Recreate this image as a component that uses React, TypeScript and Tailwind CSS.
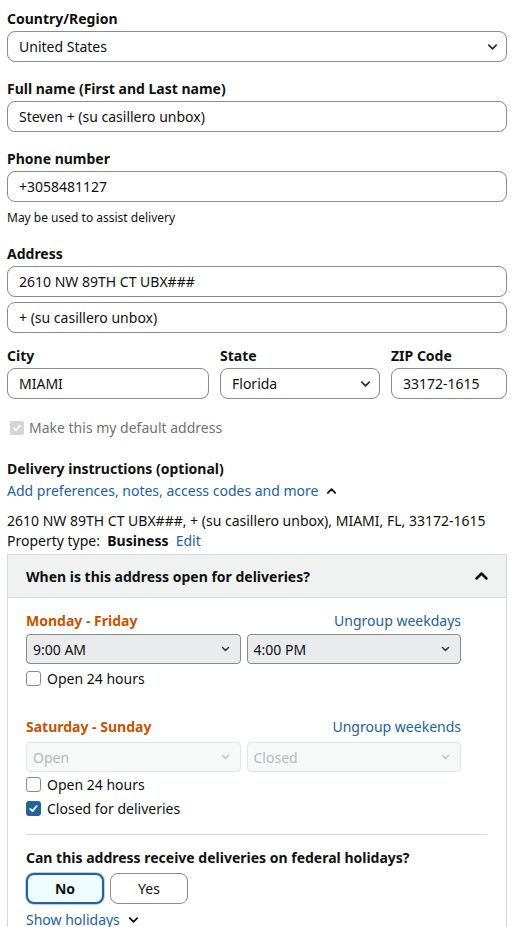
import React from 'react';

const ChevronDown = ({ className = '' }: { className?: string }) => (
  <svg viewBox="0 0 12 8" className={className} fill="none" stroke="currentColor" strokeWidth="2" strokeLinecap="round" strokeLinejoin="round">
    <path d="M2 2l4 4 4-4" />
  </svg>
);

const ChevronUp = ({ className = '' }: { className?: string }) => (
  <svg viewBox="0 0 12 8" className={className} fill="none" stroke="currentColor" strokeWidth="2" strokeLinecap="round" strokeLinejoin="round">
    <path d="M2 6l4-4 4 4" />
  </svg>
);

const Label = ({ children }: { children: React.ReactNode }) => (
  <div className="text-[14px] font-bold leading-[18px] text-[#0f1111] mb-[3px]">{children}</div>
);

const TextBox = ({ value }: { value: string }) => (
  <div className="h-[31px] flex items-center px-[11px] border border-[#888c8c] rounded-[8px] bg-white text-[14px] text-[#0f1111]">
    {value}
  </div>
);

const SelectBox = ({ value }: { value: string }) => (
  <div className="h-[31px] flex items-center justify-between pl-[11px] pr-[8px] border border-[#888c8c] rounded-[8px] bg-white text-[14px] text-[#0f1111]">
    <span>{value}</span>
    <ChevronDown className="w-[11px] h-[8px] text-[#333]" />
  </div>
);

const TimeSelect = ({ value, disabled }: { value: string; disabled?: boolean }) => (
  <div
    className={
      disabled
        ? 'flex-1 h-[30px] flex items-center justify-between pl-[6px] pr-[10px] border border-[#e3e6e6] rounded-[4px] bg-[#f7f8f8] text-[14px] text-[#b5b9b9]'
        : 'flex-1 h-[30px] flex items-center justify-between pl-[6px] pr-[10px] border border-[#888c8c] rounded-[4px] bg-[#e9ebed] text-[14px] text-[#0f1111]'
    }
  >
    <span>{value}</span>
    <ChevronDown className={disabled ? 'w-[9px] h-[6px] text-[#c0c4c4]' : 'w-[9px] h-[6px] text-[#333]'} />
  </div>
);

const Check = ({ checked, label }: { checked?: boolean; label: string }) => (
  <div className="flex items-center gap-[6px] h-[24px] text-[14px] text-[#0f1111]">
    {checked ? (
      <span className="w-[15px] h-[15px] rounded-[3px] bg-[#2162a1] flex items-center justify-center">
        <svg viewBox="0 0 12 12" className="w-[11px] h-[11px]" fill="none" stroke="white" strokeWidth="2" strokeLinecap="round" strokeLinejoin="round">
          <path d="M2.5 6.5l2.3 2.3L9.5 3.3" />
        </svg>
      </span>
    ) : (
      <span className="w-[15px] h-[15px] rounded-[3px] border border-[#888c8c] bg-white" />
    )}
    <span>{label}</span>
  </div>
);

export default function App() {
  return (
    <div className="w-[525px] min-h-[927px] bg-white px-[7px] pt-[10px] text-[#0f1111]" style={{ fontFamily: '"Noto Sans", Arial, sans-serif' }}>
      <div className="pr-[11px]">
        <Label>Country/Region</Label>
        <SelectBox value="United States" />

        <div className="mt-[18px]" />
        <Label>Full name (First and Last name)</Label>
        <TextBox value="Steven + (su casillero unbox)" />

        <div className="mt-[18px]" />
        <Label>Phone number</Label>
        <TextBox value="+3058481127" />
        <div className="text-[12px] leading-[16px] mt-[8px]">May be used to assist delivery</div>

        <div className="mt-[19px]" />
        <Label>Address</Label>
        <TextBox value="2610 NW 89TH CT UBX###" />
        <div className="mt-[5px]" />
        <TextBox value="+ (su casillero unbox)" />

        <div className="mt-[14px] flex gap-[11px]">
          <div className="w-[202px]">
            <Label>City</Label>
            <TextBox value="MIAMI" />
          </div>
          <div className="w-[160px]">
            <Label>State</Label>
            <SelectBox value="Florida" />
          </div>
          <div className="flex-1">
            <Label>ZIP Code</Label>
            <TextBox value="33172-1615" />
          </div>
        </div>

        <div className="mt-[18px] flex items-center gap-[5px] text-[14px] text-[#6f7373]">
          <span className="w-[14px] h-[14px] rounded-[2px] bg-[#d4d6d6] flex items-center justify-center ml-[3px]">
            <svg viewBox="0 0 12 12" className="w-[10px] h-[10px]" fill="none" stroke="white" strokeWidth="2" strokeLinecap="round" strokeLinejoin="round">
              <path d="M2.5 6.5l2.3 2.3L9.5 3.3" />
            </svg>
          </span>
          <span>Make this my default address</span>
        </div>

        <div className="mt-[21px] text-[14px] font-bold leading-[20px]">Delivery instructions (optional)</div>
        <div className="flex items-center gap-[8px] text-[14px] leading-[24px] text-[#2162a1]">
          <span>Add preferences, notes, access codes and more</span>
          <ChevronUp className="w-[11px] h-[8px] text-[#0f1111]" />
        </div>

        <div className="mt-[8px] text-[14px] leading-[20px]">2610 NW 89TH CT UBX###, + (su casillero unbox), MIAMI, FL, 33172-1615</div>
        <div className="text-[14px] leading-[20px]">
          Property type:&nbsp; <span className="font-bold">Business</span>&nbsp;&nbsp;<span className="text-[#2162a1]">Edit</span>
        </div>
      </div>

      <div className="mt-[3px] mr-[11px] border border-[#d5d9d9] border-b-0">
        <div className="h-[43px] bg-[#f0f2f2] border-b border-[#d5d9d9] flex items-center justify-between pl-[18px] pr-[17px]">
          <span className="text-[14px] font-bold">When is this address open for deliveries?</span>
          <ChevronUp className="w-[15px] h-[10px] text-[#0f1111]" />
        </div>

        <div className="pl-[18px] pr-[45px] pt-[13px] pb-[20px]">
          <div className="flex items-center justify-between text-[14px] leading-[20px]">
            <span className="font-bold text-[#c45500]">Monday - Friday</span>
            <span className="text-[#2162a1]">Ungroup weekdays</span>
          </div>
          <div className="mt-[3px] flex gap-[6px]">
            <TimeSelect value="9:00 AM" />
            <TimeSelect value="4:00 PM" />
          </div>
          <div className="mt-[2px]">
            <Check label="Open 24 hours" />
          </div>

          <div className="mt-[27px] flex items-center justify-between text-[14px] leading-[20px]">
            <span className="font-bold text-[#c45500]">Saturday - Sunday</span>
            <span className="text-[#2162a1]">Ungroup weekends</span>
          </div>
          <div className="mt-[5px] flex gap-[6px]">
            <TimeSelect value="Open" disabled />
            <TimeSelect value="Closed" disabled />
          </div>
          <div className="mt-[0px]">
            <Check label="Open 24 hours" />
            <Check checked label="Closed for deliveries" />
          </div>

          <div className="mt-[14px] mr-[-26px] border-t border-[#d5d9d9]" />

          <div className="mt-[13px] text-[14px] font-bold leading-[20px]">Can this address receive deliveries on federal holidays?</div>
          <div className="mt-[5px] flex gap-[6px]">
            <div className="w-[78px] h-[31px] rounded-[8px] border-2 border-[#2162a1] bg-[#edfdff] flex items-center justify-center text-[14px] font-bold shadow-[0_0_0_1px_#b6d1ec]">
              No
            </div>
            <div className="w-[78px] h-[31px] rounded-[8px] border border-[#888c8c] bg-white flex items-center justify-center text-[14px]">
              Yes
            </div>
          </div>
          <div className="mt-[6px] flex items-center gap-[8px] text-[14px] leading-[20px] text-[#2162a1]">
            <span>Show holidays</span>
            <ChevronDown className="w-[11px] h-[8px] text-[#0f1111]" />
          </div>
        </div>
      </div>
    </div>
  );
}
